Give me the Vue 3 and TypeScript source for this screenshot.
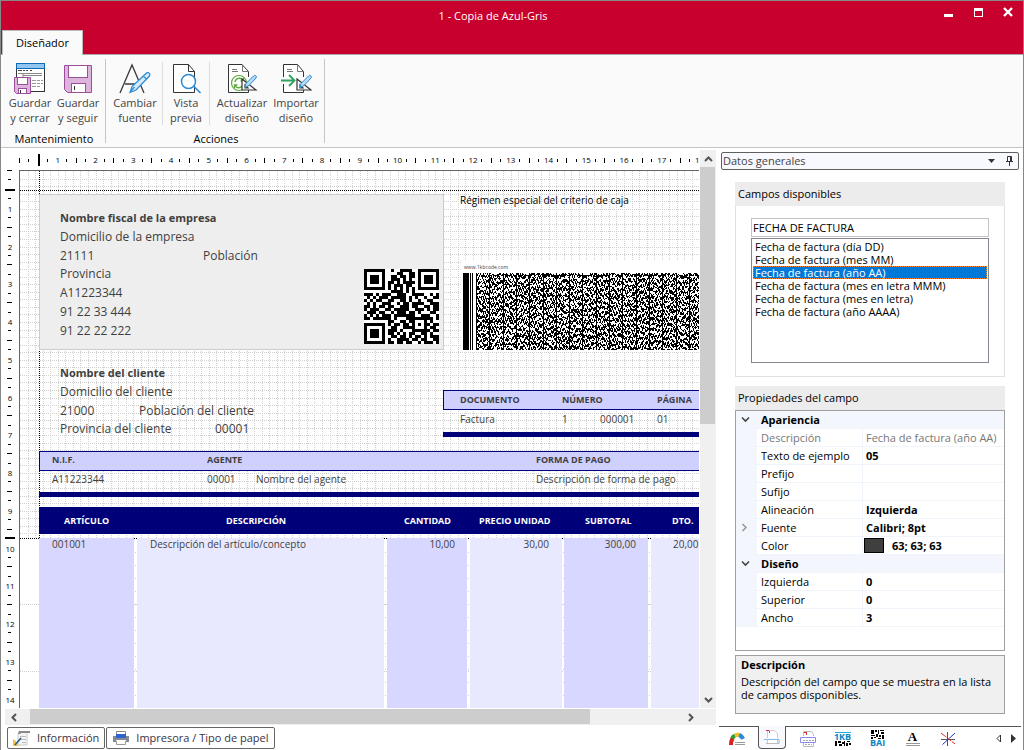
<script setup lang="ts">
import { computed, onBeforeUnmount, onMounted, ref } from 'vue'

interface Field {
  text: string
  x: number
  y: number
  kind: string
  right?: boolean
}

const CM = 37.75
const GRID = 7.55

const fields: Field[] = [
  { text: 'Nombre fiscal de la empresa', x: 41, y: 48, kind: 'big strong' },
  { text: 'Domicilio de la empresa', x: 41, y: 67, kind: 'big' },
  { text: '21111', x: 41, y: 86, kind: 'big' },
  { text: 'Población', x: 184, y: 86, kind: 'big' },
  { text: 'Provincia', x: 41, y: 104, kind: 'big' },
  { text: 'A11223344', x: 41, y: 123, kind: 'big' },
  { text: '91 22 33 444', x: 41, y: 142, kind: 'big' },
  { text: '91 22 22 222', x: 41, y: 161, kind: 'big' },
  { text: 'Nombre del cliente', x: 41, y: 203, kind: 'big strong' },
  { text: 'Domicilio del cliente', x: 41, y: 222, kind: 'big' },
  { text: '21000', x: 41, y: 241, kind: 'big' },
  { text: 'Población del cliente', x: 120, y: 241, kind: 'big' },
  { text: 'Provincia del cliente', x: 41, y: 259, kind: 'big' },
  { text: '00001', x: 196, y: 259, kind: 'big' },
  { text: 'Régimen especial del criterio de caja', x: 441, y: 30, kind: 'small black' },
  { text: 'www.1kbcode.com', x: 445, y: 97, kind: 'tiny' },
  { text: 'DOCUMENTO', x: 441, y: 230, kind: 'small strong' },
  { text: 'NÚMERO', x: 543, y: 230, kind: 'small strong' },
  { text: 'PÁGINA', x: 638, y: 230, kind: 'small strong' },
  { text: 'Factura', x: 441, y: 249, kind: 'small' },
  { text: '1', x: 543, y: 249, kind: 'small' },
  { text: '000001', x: 581, y: 249, kind: 'small' },
  { text: '01', x: 638, y: 249, kind: 'small' },
  { text: 'N.I.F.', x: 33, y: 290, kind: 'small strong' },
  { text: 'AGENTE', x: 188, y: 290, kind: 'small strong' },
  { text: 'FORMA DE PAGO', x: 517, y: 290, kind: 'small strong' },
  { text: 'A11223344', x: 33, y: 309, kind: 'small' },
  { text: '00001', x: 188, y: 309, kind: 'small' },
  { text: 'Nombre del agente', x: 237, y: 309, kind: 'small' },
  { text: 'Descripción de forma de pago', x: 517, y: 309, kind: 'small' },
  { text: 'ARTÍCULO', x: 45, y: 351, kind: 'small strong white' },
  { text: 'DESCRIPCIÓN', x: 207, y: 351, kind: 'small strong white' },
  { text: 'CANTIDAD', x: 385, y: 351, kind: 'small strong white' },
  { text: 'PRECIO UNIDAD', x: 460, y: 351, kind: 'small strong white' },
  { text: 'SUBTOTAL', x: 566, y: 351, kind: 'small strong white' },
  { text: 'DTO.', x: 653, y: 351, kind: 'small strong white' },
  { text: '001001', x: 33, y: 374, kind: 'small' },
  { text: 'Descripción del artículo/concepto', x: 131, y: 374, kind: 'small' },
  { text: '10,00', x: 436, y: 374, kind: 'small', right: true },
  { text: '30,00', x: 530, y: 374, kind: 'small', right: true },
  { text: '300,00', x: 617, y: 374, kind: 'small', right: true },
  { text: '20,00', x: 654, y: 374, kind: 'small' },
]

interface Shape {
  x: number
  y: number
  w: number
  h: number
  kind: string
}

const shapes: Shape[] = [
  { x: 20, y: 24, w: 405, h: 156, kind: 'company' },
  { x: 442, y: 91, w: 1200, h: 91, kind: 'blank' },
  { x: 424, y: 220, w: 1200, h: 20, kind: 'band' },
  { x: 424, y: 262, w: 1200, h: 5, kind: 'bar' },
  { x: 20, y: 281, w: 1600, h: 20, kind: 'band' },
  { x: 20, y: 322, w: 1600, h: 5, kind: 'bar' },
  { x: 20, y: 337, w: 1600, h: 27, kind: 'bar' },
]

const columns = [
  { x: 20, w: 95, kind: 'dark' },
  { x: 118, w: 247, kind: 'light' },
  { x: 368, w: 80, kind: 'dark' },
  { x: 451, w: 92, kind: 'light' },
  { x: 545, w: 84, kind: 'dark' },
  { x: 632, w: 1000, kind: 'light' },
]

const canvas = ref<HTMLElement | null>(null)
const canvasWidth = ref(680)
const canvasHeight = ref(538)
let observer: ResizeObserver | undefined
onMounted(() => {
  observer = new ResizeObserver(([entry]) => {
    canvasWidth.value = entry.contentRect.width
    canvasHeight.value = entry.contentRect.height
  })
  if (canvas.value) observer.observe(canvas.value)
})
onBeforeUnmount(() => observer?.disconnect())

const quarters = (size: number) => Array.from({ length: Math.floor((size * 4) / CM) + 1 }, (_, i) => i)
const isTick = (i: number) => i === 0 || (i % 4 !== 0 && i !== 2)
const numbers = (size: number) => Array.from({ length: Math.floor((size + 2) / CM) }, (_, i) => i + 1)
const hTicks = computed(() => quarters(canvasWidth.value).filter(isTick))
const vTicks = computed(() => quarters(canvasHeight.value).filter((i) => isTick(i) && i !== 39))
const hNumbers = computed(() => numbers(canvasWidth.value))
const vNumbers = computed(() => numbers(canvasHeight.value))
const tickPos = (i: number) => Math.round((i * CM) / 4)

const gridV = Array.from({ length: 260 }, (_, i) => Math.round((i + 1) * GRID))
const gridH = Array.from({ length: 48 }, (_, i) => Math.round((i + 1) * GRID))

const qrRows = [
  '1111111001001111001111111',
  '1000001000011001101000001',
  '1011101001101101101011101',
  '1011101001110101001011101',
  '1011101011010111101011101',
  '1000001010111011001000001',
  '1111111010101010101111111',
  '0000000001111010100000000',
  '1110101110011100111100101',
  '0101011101111101010010011',
  '1010110011001101001001100',
  '0101001110010110111100111',
  '1101011011001110110011011',
  '1011100110111110011101011',
  '0111011001011101101000110',
  '1010101110111111100111001',
  '1101111110100011111111101',
  '0000000011001101100010100',
  '1111111010110110101011011',
  '1000001001100111100010110',
  '1011101011101000111111011',
  '1011101011010101100110100',
  '1011101001101101011010111',
  '1000001010011110110110011',
  '1111111011011011001011101',
]
const qrPath = qrRows
  .map((row, y) => [...row].map((c, x) => (c === '1' ? `M${x} ${y}h1v1h-1z` : '')).join(''))
  .join('')

function stackedBarcode(width: number, height: number): string {
  let seed = 20417
  const rand = () => {
    seed = (seed + 0x6d2b79f5) | 0
    let t = Math.imul(seed ^ (seed >>> 15), 1 | seed)
    t = (t + Math.imul(t ^ (t >>> 7), 61 | t)) ^ t
    return ((t ^ (t >>> 14)) >>> 0) / 4294967296
  }
  let d = `M0 0h6v${height}h-6zM7 0h1v${height}h-1zM9 0h1v${height}h-1z`
  const pitch = 13.3
  for (let k = 0; 13 + k * pitch < width; k++) {
    d += `M${Math.round(13 + k * pitch)} 0h1v${height}h-1z`
  }
  for (let x = 14; x < width; x++) {
    let y = Math.floor(rand() * 3)
    while (y < height) {
      const ink = Math.min(1 + Math.floor(rand() * 4), height - y)
      d += `M${x} ${y}h1v${ink}h-1z`
      y += ink + 1 + Math.floor(rand() * 4)
    }
  }
  return d
}
const barcodePath = stackedBarcode(640, 77)

const search = ref('FECHA DE FACTURA')
const selected = ref(2)
const available = [
  'Fecha de factura (día DD)',
  'Fecha de factura (mes MM)',
  'Fecha de factura (año AA)',
  'Fecha de factura (mes en letra MMM)',
  'Fecha de factura (mes en letra)',
  'Fecha de factura (año AAAA)',
]

interface Prop {
  name: string
  value?: string
  group?: boolean
  muted?: boolean
  more?: boolean
  swatch?: boolean
}
const props: Prop[] = [
  { name: 'Apariencia', group: true },
  { name: 'Descripción', value: 'Fecha de factura (año AA)', muted: true },
  { name: 'Texto de ejemplo', value: '05' },
  { name: 'Prefijo', value: '' },
  { name: 'Sufijo', value: '' },
  { name: 'Alineación', value: 'Izquierda' },
  { name: 'Fuente', value: 'Calibri; 8pt', more: true },
  { name: 'Color', value: '63; 63; 63', swatch: true },
  { name: 'Diseño', group: true },
  { name: 'Izquierda', value: '0' },
  { name: 'Superior', value: '0' },
  { name: 'Ancho', value: '3' },
]
</script>

<template>
  <div class="window">
    <header class="titlebar">
      <h1>1 - Copia de Azul-Gris</h1>
      <div class="controls">
        <button aria-label="Minimizar"><svg width="16" height="16" viewBox="0 0 16 16"><path d="M4 10h9v3H4z" fill="#fff" /></svg></button>
        <button aria-label="Maximizar"><svg width="16" height="16" viewBox="0 0 16 16"><path fill-rule="evenodd" d="M4 4h9v9H4zM5 7v5h7V7z" fill="#fff" /></svg></button>
        <button aria-label="Cerrar"><svg width="16" height="16" viewBox="0 0 16 16"><path d="M4 4l8 8M12 4l-8 8" stroke="#fff" stroke-width="2.4" /></svg></button>
      </div>
      <button class="main-tab">Diseñador</button>
    </header>

    <section class="ribbon">
      <div class="rgroup">
        <div class="rbuttons">
          <button class="rbtn">
            <svg width="32" height="32" viewBox="0 0 32 32">
              <rect x="2.500" y="1.500" width="28" height="28" fill="#fff" stroke="#333" />
              <rect x="2.500" y="1.500" width="28" height="5" fill="#92c5f0" stroke="#0e6bb8" />
              <path d="M4 8.500h4M9 8.500h2M12 8.500h2M16 8.500h2" stroke="#444" />
              <path d="M4 11.500h24M9 11v4M9 13.500h19" stroke="#888" />
              <path d="M18 18.500h4M23 18.500h3M27 18.500h2M18 21.500h4M23 21.500h3M27 21.500h2M18 24.500h4M23 24.500h3" stroke="#999" />
              <path d="M0.500 15.500h16v16h-14l-2-2z" fill="#dcb4dc" stroke="#9b4f9b" />
              <rect x="3.500" y="15.500" width="10" height="7" fill="#fff" stroke="#9b4f9b" />
              <rect x="4.500" y="26.500" width="8" height="5" fill="#fff" stroke="#9b4f9b" />
              <path d="M6.500 28v3" stroke="#333" />
            </svg>
            <span>Guardar<br />y cerrar</span>
          </button>
          <button class="rbtn">
            <svg width="32" height="32" viewBox="0 0 32 32">
              <path d="M2.500 3.500h27v27h-24l-3-3z" fill="#dcb4dc" stroke="#9b4f9b" />
              <rect x="6.500" y="3.500" width="19" height="12" fill="#fff" stroke="#9b4f9b" />
              <rect x="9.500" y="21.500" width="14" height="9" fill="#fff" stroke="#9b4f9b" />
              <path d="M12.500 24v4" stroke="#333" />
            </svg>
            <span>Guardar<br />y seguir</span>
          </button>
        </div>
        <h2>Mantenimiento</h2>
      </div>
      <div class="rgroup">
        <div class="rbuttons">
          <button class="rbtn">
            <svg width="32" height="32" viewBox="0 0 32 32">
              <path d="M1 31L13 3l12 28M6 22h14" fill="none" stroke="#3a3a3a" stroke-width="1.300" />
              <path d="M27 11.500a2 2 0 0 1 3.500 2.500L17 28l-6 2.500 2-6z" fill="#d4ebfb" stroke="#2a8ad4" stroke-width="1.200" />
              <path d="M24.500 14.500l3 2.500M12 29l3.500-4" stroke="#2a8ad4" stroke-width="1.200" />
            </svg>
            <span>Cambiar<br />fuente</span>
          </button>
          <button class="rbtn mid ruled">
            <svg width="32" height="32" viewBox="0 0 32 32">
              <path d="M3.500 2.500h15l6 7v21h-21z" fill="#fff" stroke="#333" />
              <path d="M18.500 2.500v7h6" fill="none" stroke="#333" />
              <path d="M23.500 24l7 7" stroke="#2a8ad4" stroke-width="1.600" />
              <circle cx="18.500" cy="19.500" r="7" fill="#fff" stroke="#2a8ad4" stroke-width="1.500" />
            </svg>
            <span>Vista<br />previa</span>
          </button>
          <button class="rbtn act ruled">
            <svg width="32" height="32" viewBox="0 0 32 32">
              <path d="M22.500 15v-5.500l-6.500-7H2.500v28h20v-4" fill="#fff" stroke="#333" />
              <path d="M16.500 2.500v7h6M6 7.500h5M6 9.500h6" fill="none" stroke="#777" />
              <circle cx="13" cy="21" r="7.500" fill="#fff" stroke="#5aab3c" stroke-width="1.200" />
              <path d="M9 20a4.300 4.300 0 0 1 8-1.500M17.500 16v3h-3M17 22a4.300 4.300 0 0 1-8 1.500M8.500 26v-3h3" fill="none" stroke="#5aab3c" stroke-width="1.400" />
              <path d="M16 17v11h14zM19 23v3h3z" fill="#fff" stroke="#333" stroke-width="1.200" />
              <path d="M27.500 14a1.500 1.500 0 0 1 2.500 2l-7 7.500-4 2 1-4z" fill="#b8dcf6" stroke="#2a8ad4" />
            </svg>
            <span>Actualizar<br />diseño</span>
          </button>
          <button class="rbtn imp">
            <svg width="32" height="32" viewBox="0 0 32 32">
              <path d="M3.500 15v-12.500h14l6 7V15M3.500 22v8.500h20V27" fill="#fff" stroke="#333" />
              <path d="M17.500 2.500v7h6M7 7.500h5M7 9.500h6" fill="none" stroke="#777" />
              <path d="M1 18.500h13M9 13l5.500 5.500L9 24" fill="none" stroke="#2fa35f" stroke-width="1.800" />
              <path d="M17 17v11h14zM20 23v3h3z" fill="#fff" stroke="#333" stroke-width="1.200" />
              <path d="M28.500 14a1.500 1.500 0 0 1 2.500 2l-7 7.500-4 2 1-4z" fill="#b8dcf6" stroke="#2a8ad4" />
            </svg>
            <span>Importar<br />diseño</span>
          </button>
        </div>
        <h2>Acciones</h2>
      </div>
    </section>

    <main class="body">
      <section class="designer">
        <div class="sheet">
          <div class="corner"></div>
          <svg class="ruler-h" aria-hidden="true">
            <rect x="19" y="4" width="2" height="12" />
            <rect v-for="i in hTicks" :key="i" :x="tickPos(i)" :y="i % 2 ? 9 : 8" width="1" :height="i % 2 ? 3 : 5" />
            <text v-for="n in hNumbers" :key="n" :x="n * CM + 1" y="13">{{ n }}</text>
          </svg>
          <svg class="ruler-v" aria-hidden="true">
            <rect x="4" y="19" width="10" height="2" />
            <rect x="4" y="367" width="10" height="2" />
            <rect v-for="i in vTicks" :key="i" :x="i % 2 ? 7 : 6" :y="tickPos(i)" :width="i % 2 ? 3 : 5" height="1" />
            <text v-for="n in vNumbers" :key="n" x="9" :y="n * CM + 4">{{ n }}</text>
          </svg>
          <div ref="canvas" class="canvas">
            <svg class="grid">
              <path v-for="x in gridV" :key="'v' + x" :d="`M${x}.5 0V367`" class="dots" />
              <path v-for="y in gridH" :key="'h' + y" :d="`M0 ${y}.5H2000`" class="dots" />
              <path v-for="n in 8" :key="'r' + n" :d="`M0 ${n * 67 + 366}.5H2000`" class="dots" />
              <path v-for="x in [115, 365, 448, 543, 629]" :key="'c' + x" :d="`M${x}.5 381V1200`" class="dots sparse" />
              <path d="M0 19.500H2000M0 367.500H2000M19.500 0V367" class="margin" />
            </svg>
            <div
              v-for="(s, i) in shapes"
              :key="'s' + i"
              class="shape"
              :class="s.kind"
              :style="{ left: s.x - 1 + 'px', top: s.y - 1 + 'px', width: s.w + 'px', height: s.h + 'px' }"
            ></div>
            <div
              v-for="(c, i) in columns"
              :key="'k' + i"
              class="column"
              :class="c.kind"
              :style="{ left: c.x - 1 + 'px', width: c.w + 'px' }"
            ></div>
            <svg class="qr" viewBox="0 0 25 25"><path d="M0 0h25v25H0z" fill="#fff" /><path :d="qrPath" fill="#000" /></svg>
            <svg class="barcode"><path :d="barcodePath" fill="#000" /></svg>
            <span
              v-for="(f, i) in fields"
              :key="'f' + i"
              class="field"
              :class="[f.kind, { right: f.right }]"
              :style="{ left: f.x - 1 + 'px', top: f.y - 1 + 'px' }"
            >{{ f.text }}</span>
          </div>
        </div>
        <div class="vscroll">
          <button aria-label="Arriba"><svg width="9" height="6" viewBox="0 0 9 6"><path d="M1 5l3.500-3.500L8 5" /></svg></button>
          <div class="track"><div class="thumb"></div></div>
          <button aria-label="Abajo"><svg width="9" height="6" viewBox="0 0 9 6"><path d="M1 1l3.500 3.500L8 1" /></svg></button>
        </div>
        <div class="hscroll">
          <button aria-label="Izquierda"><svg width="6" height="9" viewBox="0 0 6 9"><path d="M5 1L1.500 4.500 5 8" /></svg></button>
          <div class="track"><div class="thumb"></div></div>
          <button aria-label="Derecha"><svg width="6" height="9" viewBox="0 0 6 9"><path d="M1 1l3.500 3.500L1 8" /></svg></button>
        </div>
        <nav class="sheet-tabs">
          <button>
            <svg width="18" height="18" viewBox="0 0 18 18">
              <path d="M6 2h11v2H8v3H5V4z" fill="#8a8a8a" />
              <path d="M5 5v11h9V4" fill="#f4f4f4" stroke="#ccc" />
              <path d="M7 7.500h6M7 10.500h6M9 13.500h4" stroke="#bbb" />
              <path d="M0 10l3 2 1 4 4 1H0z" fill="#f5c04a" />
              <path d="M2 16l6-7" stroke="#235a8c" stroke-width="1.600" />
            </svg>
            Información
          </button>
          <button>
            <svg width="18" height="18" viewBox="0 0 18 18">
              <path d="M4.500 7V2.500h9V7" fill="#fff" stroke="#888" />
              <path d="M1 7h16v6h-3v-2H4v2H1z" fill="#858a90" />
              <path d="M4 5h10v4H4z" fill="#2c63cc" />
              <path d="M4.500 12v3.500h9V12" fill="#fff" stroke="#999" />
            </svg>
            Impresora / Tipo de papel
          </button>
        </nav>
      </section>

      <aside class="side">
        <div class="dock-title">
          <span>Datos generales</span>
          <button aria-label="Menú"><svg width="9" height="5" viewBox="0 0 9 5"><path d="M1 0h7L4.500 4z" fill="#333" /></svg></button>
          <button aria-label="Fijar"><svg width="9" height="10" viewBox="0 0 9 10"><path d="M2.500 5.500v-5h4v5M5.500 0v6M1 5.500h7M4.500 6v4" fill="none" stroke="#333" /></svg></button>
        </div>
        <div class="panels">
          <section class="group">
            <h3><label for="search">Campos disponibles</label></h3>
            <div class="group-body">
              <input id="search" v-model="search" type="text" />
              <ul role="listbox" aria-label="Campos disponibles">
                <li
                  v-for="(item, i) in available"
                  :key="item"
                  role="option"
                  :aria-selected="i === selected"
                  :class="{ on: i === selected }"
                  @click="selected = i"
                >{{ item }}</li>
              </ul>
            </div>
          </section>
          <section class="group props">
            <h3>Propiedades del campo</h3>
            <div class="prop-grid">
              <table>
                <colgroup><col class="c1" /><col class="c2" /><col /></colgroup>
                <tbody>
                  <tr v-for="p in props" :key="p.name" :class="{ head: p.group, muted: p.muted }">
                    <td class="gutter">
                      <svg v-if="p.group" width="9" height="7" viewBox="0 0 9 7"><path d="M1 1.500L4.500 5 8 1.500" fill="none" stroke="#444" stroke-width="1.600" /></svg>
                      <svg v-else-if="p.more" width="7" height="9" viewBox="0 0 7 9"><path d="M1.500 1L5 4.500 1.500 8" fill="none" stroke="#999" stroke-width="1.600" /></svg>
                    </td>
                    <th :colspan="p.group ? 2 : 1" scope="row">{{ p.name }}</th>
                    <td v-if="!p.group" class="value"><i v-if="p.swatch" class="swatch"></i>{{ p.value }}</td>
                  </tr>
                </tbody>
              </table>
            </div>
          </section>
          <section class="help">
            <h4>Descripción</h4>
            <p>Descripción del campo que se muestra en la lista de campos disponibles.</p>
          </section>
        </div>
        <nav class="side-tabs">
          <button aria-label="Colores">
            <svg width="18" height="18" viewBox="0 0 18 18">
              <path d="M3 15c0-3 0-5 2-7" fill="none" stroke="#e02020" stroke-width="4" />
              <path d="M4 8.500a7 7 0 0 1 3-3" fill="none" stroke="#30a030" stroke-width="4" />
              <path d="M7 5.500a6 6 0 0 1 4-.5" fill="none" stroke="#f2c020" stroke-width="4" />
              <path d="M11 5a6.500 6.500 0 0 1 4 4" fill="none" stroke="#2a8ad4" stroke-width="4" />
              <path d="M7 12.500h10M7 14.500h10" stroke="#999" />
            </svg>
          </button>
          <button class="active" aria-label="Campos">
            <svg width="18" height="18" viewBox="0 0 18 18">
              <path d="M4.500 10V2.500h7l3 3V10M4.500 11v4.500h10V11" fill="#fff" stroke="#ccc" />
              <path d="M3 2h3v1H3zM6 3h1v2H6z" fill="#d03030" />
              <path d="M1 11.500h15v4" fill="none" stroke="#85b8e6" />
              <path d="M3 15.500h13" stroke="#bbb" />
            </svg>
          </button>
          <button aria-label="Secciones">
            <svg width="18" height="18" viewBox="0 0 18 18">
              <path d="M4.500 6V1.500h8l2 3V6M4.500 11v5.500h10V11" fill="#fff" stroke="#bbb" />
              <path d="M5 2h3v1H5zM7 3h1v2H7z" fill="#d03030" />
              <path d="M1.500 7.500h15v5h-15z" fill="#fff" stroke="#8a8af0" />
              <path d="M4 10.500h11M6 14.500h7" stroke="#aaa" stroke-dasharray="2 1" />
            </svg>
          </button>
          <button aria-label="1KB" class="codes kb"><i></i><b>1KB</b><svg width="16" height="5" viewBox="0 0 16 5"><path d="M0 0h2v5H0zM3 0h3v2H3zM4 3h3v2H4zM7 1h2v2H7zM9 0h1v5H9zM11 2h2v3h-2zM12 0h3v1h-3zM14 2h2v2h-2z" /></svg></button>
          <button aria-label="BAI" class="codes bai"><svg width="13" height="9" viewBox="0 0 13 9"><path d="M0 0h3v4H0zM4 0h2v2H4zM7 0h1v4H7zM9 0h4v1H9zM10 2h3v2h-3zM0 5h4v1H0zM5 4h2v3H5zM0 7h2v2H0zM3 7h2v1H3zM8 5h2v2H8zM11 5h2v4h-2zM7 8h3v1H7z" /></svg><b>BAI</b></button>
          <button aria-label="Texto" class="letter"><b>A</b><i></i><i></i></button>
          <button aria-label="Líneas">
            <svg width="18" height="18" viewBox="0 0 18 18">
              <path d="M8.500 2v14M2 9.500h14" stroke="#555" />
              <path d="M2 3l14 11" stroke="#e02020" stroke-dasharray="6 1" />
              <path d="M16 3L3 15" stroke="#2030d0" stroke-dasharray="8 1" />
            </svg>
          </button>
          <div class="arrows">
            <button aria-label="Anterior"><svg width="6" height="9" viewBox="0 0 6 9"><path d="M4.500 1v7L1 4.500z" fill="#fff" stroke="#333" /></svg></button>
            <button aria-label="Siguiente"><svg width="6" height="9" viewBox="0 0 6 9"><path d="M0 0v9l5-4.500z" fill="#333" /></svg></button>
          </div>
        </nav>
      </aside>
    </main>
  </div>
</template>

<style>
body {
  background: #fff;
}
</style>

<style scoped>
* {
  box-sizing: border-box;
}
button {
  font: inherit;
  color: inherit;
  background: none;
  border: 0;
  padding: 0;
}
svg {
  display: block;
  flex: none;
}
h1, h2, h3, h4, p, ul {
  margin: 0;
  padding: 0;
  font-weight: 400;
  font-size: inherit;
}
.window {
  display: flex;
  flex-direction: column;
  min-height: 100vh;
  border: 1px solid #888;
  background: #fff;
  font: 11px/16px "Open Sans", "Noto Sans", sans-serif;
  color: #000;
}
.titlebar {
  display: grid;
  grid-template-columns: 1fr auto 1fr;
  grid-template-rows: 29px 24px;
  background: #c8002d;
  border-bottom: 1px solid #aaa;
  height: 54px;
}
.titlebar h1 {
  grid-column: 2;
  align-self: center;
  color: #fff;
  margin-right: 38px;
}
.controls {
  display: flex;
  justify-content: flex-end;
  gap: 14px;
  padding: 3px 7px 0 0;
}
.controls button {
  width: 16px;
  height: 16px;
}
.main-tab {
  grid-column: 1;
  justify-self: start;
  width: 81px;
  height: 25px;
  margin-left: 1px;
  background: #fafafa;
  border: 1px solid #bbb;
  border-bottom: 0;
}
.ribbon {
  display: flex;
  height: 93px;
  padding: 4px 0;
  background: #fafafa;
  border-bottom: 1px solid #c6c6c6;
  line-height: 15px;
}
.rgroup {
  display: flex;
  flex-direction: column;
  gap: 7px;
  border-right: 1px solid #c6c6c6;
  padding: 3px 3px 0 5px;
}
.rgroup h2 {
  text-align: center;
  line-height: 14px;
}
.rbuttons {
  display: flex;
}
.rbtn {
  display: flex;
  flex-direction: column;
  align-items: center;
  width: 48px;
  gap: 1px;
  color: #444;
}
.rbtn.mid {
  width: 47px;
  margin-left: 3px;
}
.rbtn.act {
  width: 62px;
  padding-left: 3px;
}
.rbtn.imp {
  width: 50px;
}
.ruled {
  border-left: 1px solid #ddd;
}
.body {
  flex: 1;
  display: grid;
  grid-template-columns: minmax(0, 1fr) 304px;
}
.designer {
  display: grid;
  grid-template-columns: minmax(0, 1fr) 20px;
  grid-template-rows: minmax(0, 1fr) 18px 24px;
  padding-top: 2px;
}
.sheet {
  display: grid;
  grid-template-columns: 18px minmax(0, 1fr);
  grid-template-rows: 20px minmax(0, 1fr);
  min-height: 558px;
}
.ruler-h {
  width: 100%;
  height: 20px;
}
.ruler-v {
  width: 18px;
  height: 100%;
}
.ruler-h rect, .ruler-v rect {
  shape-rendering: crispEdges;
}
.ruler-h text, .ruler-v text {
  font: 8px "Open Sans", sans-serif;
  text-anchor: middle;
}
.canvas {
  position: relative;
  overflow: hidden;
  border: solid #666;
  border-width: 1px 0 0 1px;
}
.grid {
  position: absolute;
  inset: 0;
  width: 100%;
  height: 100%;
}
.dots {
  stroke: #d0d0d0;
  stroke-dasharray: 1 1;
}
.sparse {
  stroke-dasharray: 1 12;
}
.margin {
  stroke: #000;
  stroke-dasharray: 1 1;
}
.shape, .column, .qr, .barcode, .field {
  position: absolute;
}
.company {
  background: #eee;
  border: 1px solid #ccc;
}
.blank {
  background: #fff;
}
.band {
  background: #d0d0ff;
  border: 1px solid #000080;
}
.bar {
  background: #000078;
}
.column {
  top: 367px;
  bottom: 0;
}
.dark {
  background: #d7d7ff;
}
.light {
  background: #e8e8ff;
}
.qr {
  left: 344px;
  top: 98px;
  width: 75px;
  height: 75px;
  shape-rendering: crispEdges;
}
.barcode {
  left: 443px;
  top: 102px;
  width: 640px;
  height: 77px;
  shape-rendering: crispEdges;
}
.field {
  white-space: nowrap;
  line-height: 16px;
  transform: translateY(-50%);
  color: #3f3f3f;
}
.field.right {
  transform: translate(-100%, -50%);
}
.big {
  font-size: 12px;
}
.big.strong {
  font-size: 11px;
}
.small {
  font-size: 10px;
}
.small.strong {
  font-size: 9px;
}
.tiny {
  font-size: 5px;
}
.strong {
  font-weight: 700;
}
.black {
  color: #000;
}
.white {
  color: #fff;
}
.vscroll, .hscroll {
  display: flex;
  background: #f0f0f0;
}
.vscroll {
  flex-direction: column;
  width: 16px;
  margin-left: 1px;
}
.hscroll {
  grid-column: 1 / -1;
  margin: 1px 3px 1px 4px;
}
.vscroll button, .hscroll button {
  display: grid;
  place-items: center;
  flex: none;
}
.vscroll button {
  height: 17px;
}
.hscroll button {
  width: 17px;
}
.hscroll button:last-child {
  width: 50px;
}
.vscroll path, .hscroll path {
  fill: none;
  stroke: #555;
  stroke-width: 2;
}
.track {
  flex: 1;
}
.thumb {
  background: #cdcdcd;
}
.vscroll .thumb {
  width: 15px;
  height: 49%;
}
.hscroll .thumb {
  height: 15px;
  width: 87%;
  margin-left: 8px;
}
.sheet-tabs {
  grid-column: 1 / -1;
  display: flex;
  gap: 1px;
  padding: 1px 0 1px 6px;
}
.sheet-tabs button {
  display: flex;
  align-items: center;
  height: 22px;
  padding: 0 5px;
  gap: 6px;
  border: 1px solid #666;
  border-radius: 2px;
  color: #3b3344;
}
.side {
  display: flex;
  flex-direction: column;
  padding: 4px 2px 0 0;
}
.dock-title {
  display: flex;
  align-items: center;
  height: 18px;
  margin: 0 2px;
  padding: 0 4px 0 1px;
  gap: 9px;
  border: 1px solid #606060;
  border-radius: 2px;
  background: #f8f8ff;
  color: #444;
}
.dock-title span {
  flex: 1;
}
.panels {
  flex: 1;
  display: flex;
  flex-direction: column;
  padding: 12px 16px 12px;
}
.group h3 {
  height: 24px;
  padding-left: 3px;
  line-height: 24px;
  background: #ececec;
}
.group-body {
  height: 171px;
  padding: 12px 15px 13px;
  border: 1px solid #e0e0e0;
  border-top: 0;
  display: flex;
  flex-direction: column;
  gap: 1px;
}
.group-body input {
  height: 19px;
  width: 100%;
  padding: 0 1px;
  border: 1px solid #c4c4c4;
  font: inherit;
  outline: 0;
}
.group-body ul {
  flex: 1;
  padding: 1px;
  list-style: none;
  border: 1px solid #828790;
  line-height: 13px;
}
li {
  padding: 0 2px;
}
li.on {
  background: #0078d7;
  color: #fff;
  outline: 1px dotted #ff8728;
  outline-offset: -1px;
}
.props {
  flex: 1;
  display: flex;
  flex-direction: column;
  margin-top: 9px;
}
.prop-grid {
  flex: 1;
  border: 1px solid #a0a0a0;
}
table {
  width: 100%;
  table-layout: fixed;
  border-collapse: separate;
  border-spacing: 0;
}
.c1 {
  width: 21px;
}
.c2 {
  width: 105px;
}
td, th {
  height: 18px;
  padding: 0 0 0 4px;
  line-height: 17px;
  border-bottom: 1px solid #f0f4fb;
  text-align: left;
  font-weight: 400;
  white-space: nowrap;
  overflow: hidden;
}
.value {
  border-left: 1px solid #f0f4fb;
  font-weight: 700;
  padding-left: 3px;
}
.gutter, .head th {
  background: #f3f7fd;
}
.gutter {
  padding-left: 5px;
}
.head th {
  font-weight: 700;
}
.muted th, .muted td {
  color: #777;
  font-weight: 400;
}
.swatch {
  display: inline-block;
  vertical-align: top;
  width: 20px;
  height: 15px;
  margin: 1px 8px 0 -2px;
  background: #3f3f3f;
  border: 1px solid #000;
}
.help {
  height: 59px;
  margin-top: 4px;
  padding: 1px 5px;
  border: 1px solid #a0a0a0;
  background: #f0f0f0;
  line-height: 13px;
}
.help h4 {
  font-weight: 700;
  line-height: 16px;
  margin-bottom: 2px;
}
.side-tabs {
  display: flex;
  height: 24px;
  border-top: 1px solid #555;
}
.side-tabs > button {
  display: flex;
  flex-direction: column;
  align-items: center;
  justify-content: center;
  width: 35px;
  height: 23px;
}
.side-tabs > button.active {
  width: 28px;
  margin: -1px 4px 0;
  background: #f8f8ff;
  border: 1px solid #555;
  border-top: 0;
  border-radius: 0 0 4px 4px;
}
.codes b {
  color: #0a84c4;
  font-size: 9px;
  line-height: 8px;
}
.kb i {
  width: 16px;
  height: 1px;
  background: #20a8e0;
}
.letter b {
  font: 700 13px/11px "Liberation Serif", serif;
}
.letter i {
  width: 14px;
  height: 1px;
  margin-top: 1px;
  background: #999;
}
.arrows {
  display: flex;
  gap: 9px;
  margin-left: auto;
  padding-right: 4px;
}
</style>
